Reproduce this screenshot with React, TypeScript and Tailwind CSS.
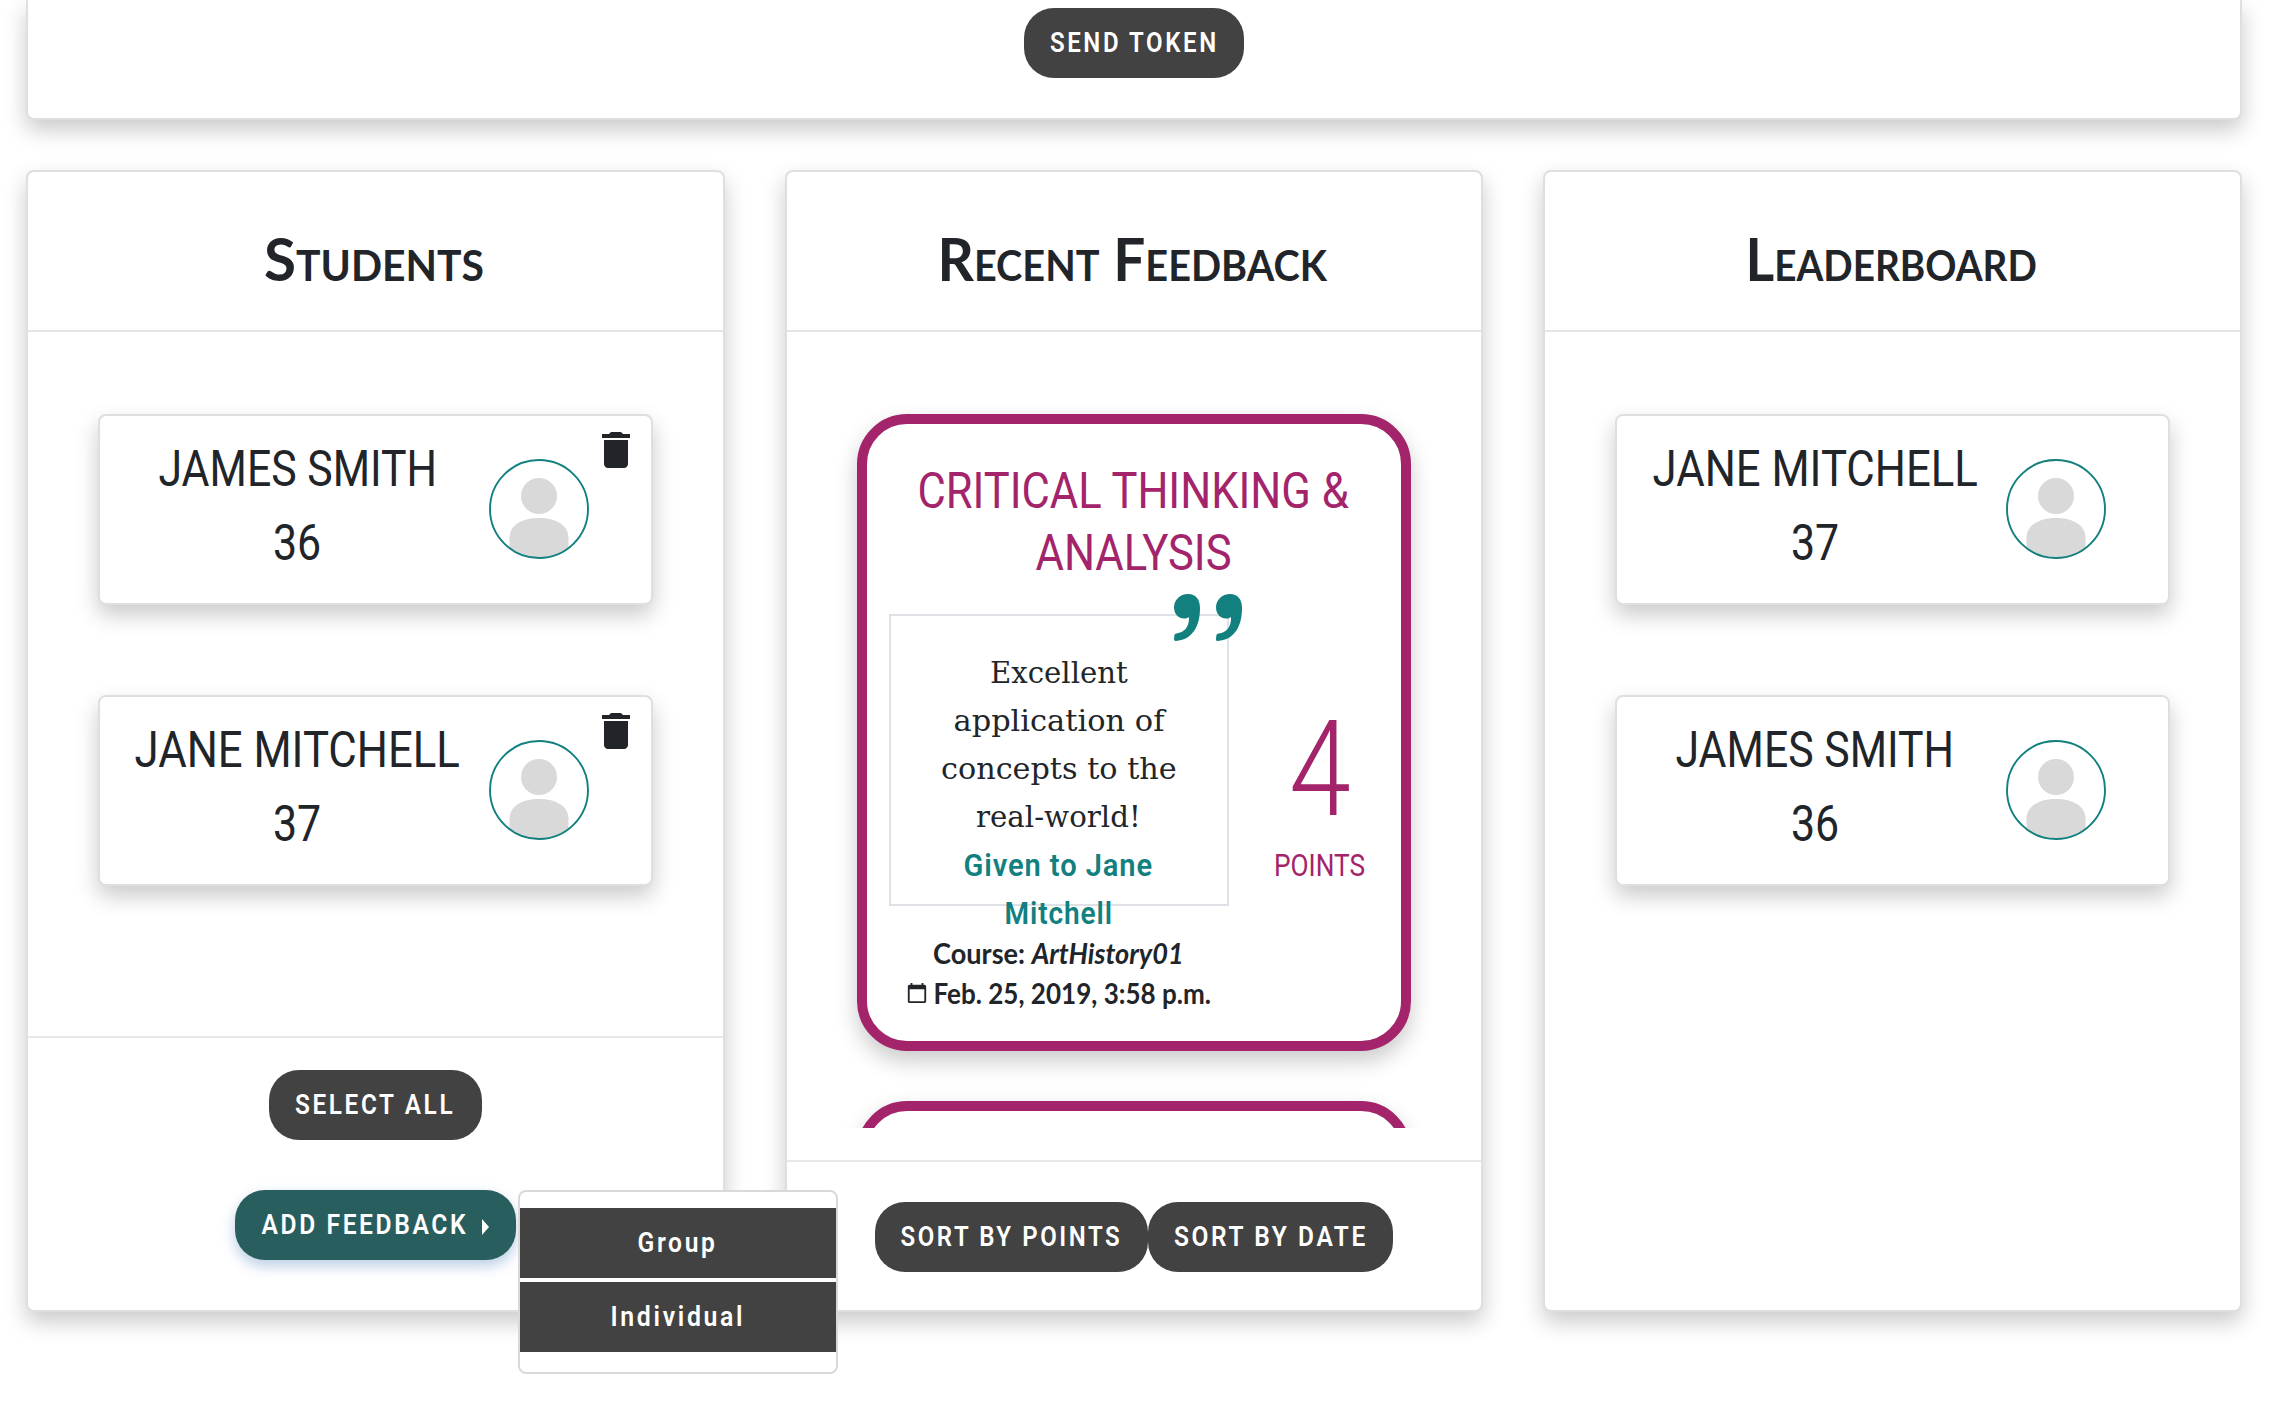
import { useLayoutEffect, useRef, useState } from "react";
import type { ReactNode } from "react";

/** One line of text condensed or widened horizontally to the given width. */
function Fit({ width, className = "", children }: { width: number; className?: string; children: ReactNode }) {
  const ref = useRef<HTMLSpanElement>(null);
  const [scale, setScale] = useState(1);
  useLayoutEffect(() => {
    if (ref.current) setScale(width / ref.current.offsetWidth);
  }, [width]);
  return (
    <span className="inline-flex justify-center whitespace-nowrap" style={{ width }}>
      <span ref={ref} className={`block shrink-0 ${className}`} style={{ transform: `scaleX(${scale})` }}>
        {children}
      </span>
    </span>
  );
}

const SHADOW = "shadow-[0_10px_22px_rgba(0,0,0,0.21)]";
const CARD = `rounded-[8px] border-2 border-[#dfdfdf] bg-white ${SHADOW}`;
const FEEDBACK_CARD = `h-[637px] shrink-0 rounded-[50px] border-[10px] border-[#a3246a] bg-white ${SHADOW}`;

function Button({ label, width, textWidth }: { label: string; width: string; textWidth: number }) {
  return (
    <button
      className={`flex h-[70px] ${width} items-center justify-center rounded-[30px] bg-[#424242] pb-px text-[28px] leading-[70px] font-semibold tracking-[3px] text-white`}
    >
      <Fit width={textWidth}>{label}</Fit>
    </button>
  );
}

function Avatar() {
  return (
    <svg viewBox="0 0 100 100" className="size-[100px] shrink-0">
      <clipPath id="avatar-clip">
        <circle cx="50" cy="50" r="49" />
      </clipPath>
      <g clipPath="url(#avatar-clip)" fill="#d9d9d9">
        <circle cx="50" cy="37" r="18" />
        <path d="M20.5 110V79C20.5 66 33 59 50 59S79.500 66 79.500 79V110Z" />
      </g>
      <circle cx="50" cy="50" r="49" fill="none" stroke="#12807f" strokeWidth="1.900" />
    </svg>
  );
}

function TrashIcon() {
  return (
    <svg viewBox="0 0 24 24" className="absolute top-[10px] right-[11px] size-[48px]" fill="#212529">
      <path d="M6 19c0 1.100.9 2 2 2h8c1.100 0 2-.9 2-2V7H6v12zM19 4h-3.500l-1-1h-5l-1 1H5v2h14V4z" />
    </svg>
  );
}

function QuoteIcon() {
  const mark = "M14 0C6 0 0 6 0 13.500C0 20 4.500 24.500 10 24.500C12 24.500 13.500 24 15 23C15.500 33 10.500 38.500 2.500 39.500C1 39.700.5 40.500.3 42L0 45C-.1 46.500.5 47 2 46.900C17 46 26 34 26 14C26 5 21.500 0 14 0Z";
  return (
    <svg viewBox="0 0 68 47" className="absolute -top-[22px] left-[283px] h-[47px] w-[68px]" fill="#12807f">
      <path d={mark} />
      <path d={mark} transform="translate(42 0)" />
    </svg>
  );
}

function StudentCard({ name, nameWidth, score, removable }: { name: string; nameWidth: number; score: string; removable?: boolean }) {
  return (
    <div className={`relative flex h-[191px] pt-4 ${CARD}`}>
      <div className="ml-[6px] flex w-[383px] shrink-0 flex-col items-center text-[50px] leading-[74px]">
        <Fit width={nameWidth}>{name}</Fit>
        <Fit width={48}>{score}</Fit>
      </div>
      <div className="pt-[27px]">
        <Avatar />
      </div>
      {removable && <TrashIcon />}
    </div>
  );
}

function Title({ text, width }: { text: string; width: number }) {
  return (
    <div className="flex h-[160px] shrink-0 items-center justify-center border-b-2 border-[#e5e5e5] pt-[14px] pr-[3px] font-['Lato'] text-[60px] leading-[72px] font-bold [font-variant:small-caps]">
      <Fit width={width}>{text}</Fit>
    </div>
  );
}

const QUOTE_LINES = [
  { text: "Excellent", width: 138 },
  { text: "application of", width: 211 },
  { text: "concepts to the", width: 236 },
  { text: "real-world!", width: 165 },
];

function FeedbackCard() {
  return (
    <div className={`pt-9 ${FEEDBACK_CARD}`}>
      <div className="flex flex-col items-center pr-px text-[50px] leading-[62px] text-[#a3246a]">
        <Fit width={431}>CRITICAL THINKING &amp;</Fit>
        <Fit width={196}>ANALYSIS</Fit>
      </div>
      <div className="mt-[30px] flex pl-[22px]">
        <div className="relative h-[292px] w-[340px] shrink-0 border-2 border-[#dee2e6]">
          <QuoteIcon />
          <div className="flex flex-col items-center pt-[33px] leading-[48px]">
            {QUOTE_LINES.map((l) => (
              <Fit key={l.text} width={l.width} className="font-['DejaVu_Serif'] text-[30px]">{l.text}</Fit>
            ))}
            <Fit width={190} className="text-[32px] font-semibold tracking-[1px] text-[#12807f]">Given to Jane</Fit>
            <Fit width={108} className="text-[32px] font-semibold tracking-[1px] text-[#12807f]">Mitchell</Fit>
            <div className="-mt-1 flex flex-col items-center font-['Lato'] text-[28px] leading-[40px] font-bold">
              <Fit width={251}>
                Course: <em>ArtHistory01</em>
              </Fit>
              <div className="flex items-center gap-[6px]">
                <svg viewBox="0 0 24 24" className="size-[22px]" fill="#212529">
                  <path d="M20 3h-1V1h-2v2H7V1H5v2H4c-1.100 0-2 .9-2 2v16c0 1.100.9 2 2 2h16c1.100 0 2-.9 2-2V5c0-1.100-.9-2-2-2zm0 18H4V8h16v13z" />
                </svg>
                <Fit width={277}>Feb. 25, 2019, 3:58 p.m.</Fit>
              </div>
            </div>
          </div>
        </div>
        <div className="flex flex-1 flex-col items-center pt-[96px] pl-[9px] text-[#a3246a]">
          <Fit width={62} className="text-[133px] leading-[120px] font-light">4</Fit>
          <div className="mt-[11px] text-[32px] leading-[48px]">
            <Fit width={91}>POINTS</Fit>
          </div>
        </div>
      </div>
    </div>
  );
}

function MenuItem({ label, width }: { label: string; width: number }) {
  return (
    <button className="flex h-[70px] w-full items-center justify-center bg-[#424242] text-[28px] leading-[70px] font-semibold tracking-[3px] text-white">
      <Fit width={width}>{label}</Fit>
    </button>
  );
}

export default function App() {
  return (
    <div className="h-[1416px] w-[2270px] overflow-hidden bg-white pl-[26px] font-['Roboto',sans-serif] text-[#212529]">
      <div className="w-[2216px]">
        <div className={`flex h-[120px] justify-center rounded-b-[8px] border-2 border-t-0 border-[#dfdfdf] bg-white pt-2 ${SHADOW}`}>
          <Button label="SEND TOKEN" width="w-[220px]" textWidth={169} />
        </div>

        <div className="mt-[50px] grid h-[1142px] grid-cols-3 gap-[60px]">
          <section className={`z-10 flex flex-col ${CARD}`}>
            <Title text="Students" width={220} />
            <div className="flex h-[704px] shrink-0 flex-col gap-[90px] px-[70px] pt-[82px]">
              <StudentCard name="JAMES SMITH" nameWidth={279} score="36" removable />
              <StudentCard name="JANE MITCHELL" nameWidth={325} score="37" removable />
            </div>
            <div className="flex flex-1 flex-col items-center gap-[50px] border-t-2 border-[#e8e8e8] pt-8">
              <Button label="SELECT ALL" width="w-[213px]" textWidth={160} />
              <div className="relative">
                <button className="flex h-[70px] w-[281px] items-center rounded-[30px] bg-[#285e5e] pb-px pl-[26px] text-[28px] leading-[70px] font-semibold tracking-[3px] text-white shadow-[0_6px_14px_rgba(80,130,190,0.4)]">
                  <Fit width={207}>ADD FEEDBACK</Fit>
                  <span className="mt-1 ml-[14px] border-y-[8px] border-l-[7px] border-y-transparent border-l-white" />
                </button>
                <div className="absolute top-0 left-[283px] h-[184px] w-[320px] rounded-[8px] border-2 border-[#d9d9d9] bg-white pt-4">
                  <MenuItem label="Group" width={80} />
                  <div className="h-1" />
                  <MenuItem label="Individual" width={135} />
                </div>
              </div>
            </div>
          </section>

          <section className={`flex flex-col ${CARD}`}>
            <Title text="Recent Feedback" width={389} />
            <div className="flex h-[796px] shrink-0 flex-col gap-[50px] overflow-hidden px-[70px] pt-[82px]">
              <FeedbackCard />
              <div className={FEEDBACK_CARD} />
            </div>
            <div className="mt-8 flex flex-1 justify-center border-t-2 border-[#e8e8e8] pt-10">
              <Button label="SORT BY POINTS" width="w-[273px]" textWidth={222} />
              <Button label="SORT BY DATE" width="w-[245px]" textWidth={194} />
            </div>
          </section>

          <section className={`flex flex-col ${CARD}`}>
            <Title text="Leaderboard" width={291} />
            <div className="flex flex-col gap-[90px] px-[70px] pt-[82px]">
              <StudentCard name="JANE MITCHELL" nameWidth={325} score="37" />
              <StudentCard name="JAMES SMITH" nameWidth={279} score="36" />
            </div>
          </section>
        </div>
      </div>
    </div>
  );
}
